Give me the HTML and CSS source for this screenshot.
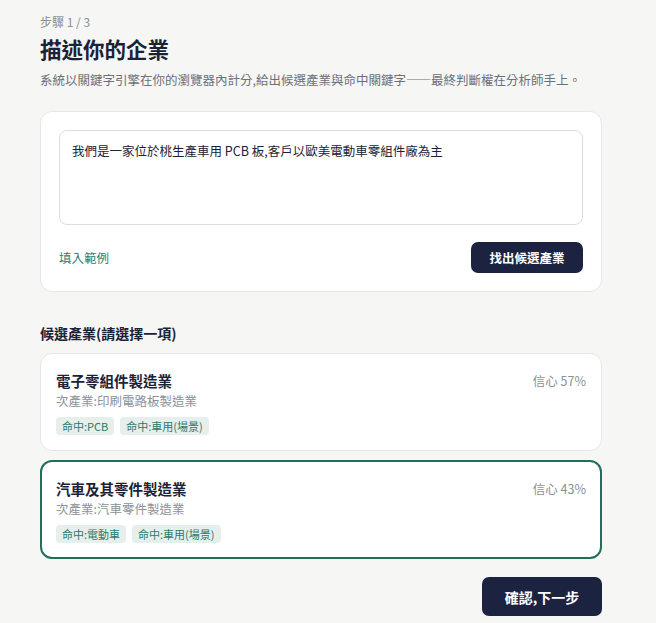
FILE: index.html
```
<!DOCTYPE html>
<html lang="zh-Hant">
<head>
<meta charset="utf-8">
<title>描述你的企業</title>
<link rel="stylesheet" href="styles.css">
</head>
<body>
<main class="page">
  <div class="step">步驟 1 / 3</div>
  <h1 class="title">描述你的企業</h1>
  <p class="lead">系統以關鍵字引擎在你的瀏覽器內計分,給出候選產業與命中關鍵字——最終判斷權在分析師手上。</p>

  <section class="panel">
    <div class="input">我們是一家位於桃生產車用 PCB 板,客戶以歐美電動車零組件廠為主</div>
    <div class="panel-row">
      <a class="link">填入範例</a>
      <button class="btn btn-find">找出候選產業</button>
    </div>
  </section>

  <h2 class="section-title">候選產業(請選擇一項)</h2>

  <div class="options">
    <div class="option">
      <div class="option-head">
        <div class="option-name">電子零組件製造業</div>
        <div class="option-conf">信心 57%</div>
      </div>
      <div class="option-sub">次產業:印刷電路板製造業</div>
      <div class="tags">
        <span class="tag">命中:PCB</span>
        <span class="tag">命中:車用(場景)</span>
      </div>
    </div>
    <div class="option option-selected">
      <div class="option-head">
        <div class="option-name">汽車及其零件製造業</div>
        <div class="option-conf">信心 43%</div>
      </div>
      <div class="option-sub">次產業:汽車零件製造業</div>
      <div class="tags">
        <span class="tag">命中:電動車</span>
        <span class="tag">命中:車用(場景)</span>
      </div>
    </div>
  </div>

  <div class="actions">
    <button class="btn btn-next">確認,下一步</button>
  </div>
</main>
</body>
</html>
```

FILE: styles.css
```
* { box-sizing: border-box; }
html, body {
  margin: 0;
  padding: 0;
  background: #f6f6f4;
}
body {
  font-family: "Noto Sans CJK TC", "Noto Sans", sans-serif;
  color: #1b2235;
}
.page {
  width: 602px;
  padding: 13px 0 0 40px;
}
.step {
  font-size: 12px;
  line-height: 18px;
  color: #8a8f98;
}
.title {
  margin: 3px 0 0;
  font-size: 21.5px;
  line-height: 30px;
  font-weight: 700;
  color: #1b2235;
}
.lead {
  margin: 6px 0 0;
  font-size: 12.5px;
  line-height: 20px;
  color: #6b7079;
  white-space: nowrap;
}
.panel {
  margin-top: 21px;
  background: #fff;
  border: 1px solid #e7e7e7;
  border-radius: 12px;
  padding: 18px;
}
.input {
  height: 95px;
  border: 1px solid #dcdde0;
  border-radius: 8px;
  padding: 10px 12px;
  font-size: 12.5px;
  line-height: 20px;
  color: #1b2235;
  background: #fff;
}
.panel-row {
  margin-top: 17px;
  display: flex;
  justify-content: space-between;
  align-items: center;
}
.link {
  font-size: 12.5px;
  color: #2a7f72;
  cursor: pointer;
}
.btn {
  font-family: "Noto Sans CJK TC", "Noto Sans", sans-serif;
  border: 0;
  background: #1b2340;
  color: #fff;
  font-weight: 700;
  cursor: pointer;
}
.btn-find {
  width: 112px;
  height: 31px;
  border-radius: 7px;
  font-size: 12.5px;
}
.section-title {
  margin: 30px 0 0;
  font-size: 14px;
  line-height: 22px;
  font-weight: 700;
  color: #1b2235;
}
.options {
  margin-top: 9px;
  display: flex;
  flex-direction: column;
  gap: 9px;
}
.option {
  background: #fff;
  border: 1px solid #e7e7e7;
  border-radius: 12px;
  padding: 17px 15px 15px;
}
.option-selected {
  border: 2px solid #1f6f5a;
  padding: 17px 14px 14px;
}
.option-head {
  display: flex;
  justify-content: space-between;
  align-items: center;
}
.option-name {
  font-size: 14.5px;
  line-height: 20px;
  font-weight: 700;
  color: #1b2235;
}
.option-conf {
  font-size: 12.5px;
  line-height: 20px;
  color: #8b9098;
}
.option-sub {
  font-size: 12.5px;
  line-height: 20px;
  color: #8d9199;
}
.tags {
  margin-top: 6px;
  display: flex;
  gap: 6px;
}
.tag {
  height: 18px;
  line-height: 18px;
  padding: 0 6px;
  border-radius: 4px;
  background: #e6efec;
  color: #2b7a6b;
  font-size: 11px;
}
.actions {
  margin-top: 18px;
  display: flex;
  justify-content: flex-end;
}
.btn-next {
  width: 120px;
  height: 39px;
  border-radius: 7px;
  font-size: 14px;
}
```
